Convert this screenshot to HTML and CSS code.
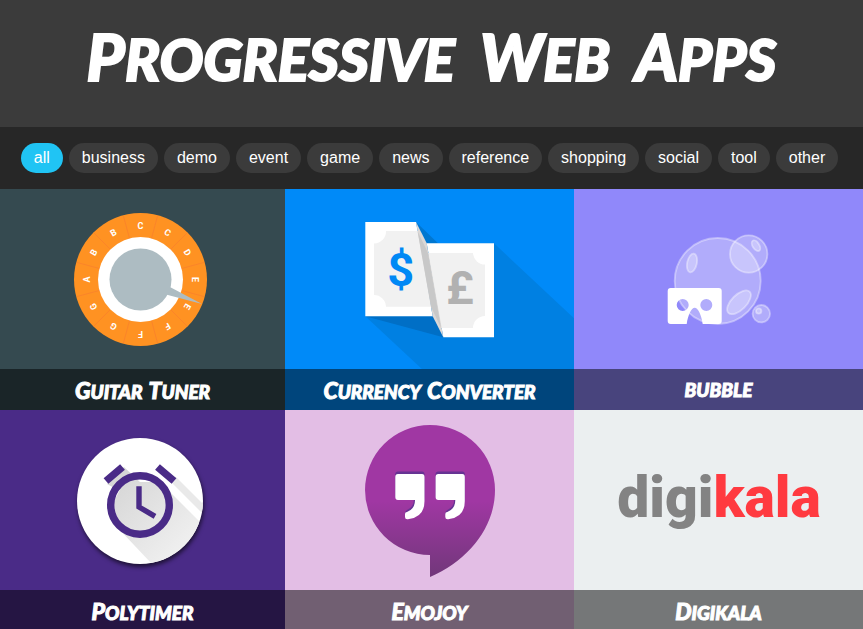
FILE: index.html
```html
<!DOCTYPE html>
<html lang="en">
<head>
<meta charset="utf-8">
<meta name="viewport" content="width=device-width, initial-scale=1">
<title>Progressive Web Apps</title>
<link rel="stylesheet" href="styles.css">
</head>
<body>
<header class="masthead">
  <h1 class="marker"><span>Progressive</span> <span>Web</span> <span>Apps</span></h1>
</header>
<nav class="filters" aria-label="Categories">
  <button type="button" class="chip active">all</button>
  <button type="button" class="chip">business</button>
  <button type="button" class="chip">demo</button>
  <button type="button" class="chip">event</button>
  <button type="button" class="chip">game</button>
  <button type="button" class="chip">news</button>
  <button type="button" class="chip">reference</button>
  <button type="button" class="chip">shopping</button>
  <button type="button" class="chip">social</button>
  <button type="button" class="chip">tool</button>
  <button type="button" class="chip">other</button>
</nav>
<main class="apps">
  <a class="app tuner" href="#tuner">
    <svg class="art" viewBox="0 0 285 180" aria-hidden="true">
      <circle cx="140.500" cy="90.500" r="66.500" fill="#ff9222"/>
      <g transform="translate(140.500 90.500)" stroke="#f9802c" stroke-width=".7">
        <path transform="rotate(15)" d="M0-66V66M-66 0H66"/>
        <path transform="rotate(45)" d="M0-66V66M-66 0H66"/>
        <path transform="rotate(75)" d="M0-66V66M-66 0H66"/>
      </g>
      <circle cx="140.500" cy="90.500" r="42.500" fill="#fff"/>
      <g class="notes" transform="translate(140.500 90.500)">
        <text y="-51">C</text>
        <text y="-51" transform="rotate(30)">C</text>
        <text y="-51" transform="rotate(60)">D</text>
        <text y="-51" transform="rotate(90)">E</text>
        <text y="-51" transform="rotate(120)">E</text>
        <text y="-51" transform="rotate(150)">F</text>
        <text y="-51" transform="rotate(180)">F</text>
        <text y="-51" transform="rotate(210)">G</text>
        <text y="-51" transform="rotate(240)">G</text>
        <text y="-51" transform="rotate(270)">A</text>
        <text y="-51" transform="rotate(300)">B</text>
        <text y="-51" transform="rotate(330)">B</text>
      </g>
      <path d="M169 97.500 202 115 166 105.500Z" fill="#adbcc2"/>
      <circle cx="140.500" cy="90.500" r="31" fill="#adbcc2"/>
    </svg>
    <h2 class="marker"><span>Guitar</span> <span>Tuner</span></h2>
  </a>
  <a class="app currency" href="#currency">
    <svg class="art" viewBox="0 0 289 180" aria-hidden="true">
      <path d="M209 54.300 909 710V854H861L80.300 127.300 141 54.300Z" fill="#0080e2"/>
      <path d="M131 33 153 54.300H141.700Z" fill="#0077d0"/>
      <path d="M80.300 127.300H148L158.300 148.300Z" fill="#006fc6"/>
      <path d="M80.300 33H131L147.700 127.300H80.300Z" fill="#fff"/>
      <path d="M101 42H134L146 117.700H101A12 12 0 0 0 89 106V54.500A12 12 0 0 0 101 42Z" fill="#f1f1f1"/>
      <path d="M141.700 54.300H209V148.300H158.300Z" fill="#fff"/>
      <path d="M143 64H188A12 12 0 0 0 200 75.500V127A12 12 0 0 0 188 139H156Z" fill="#f1f1f1"/>
      <path d="M131 33 141.700 54.300 158.300 148.300 147.700 127.300Z" fill="#dcd8d6"/>
      <path d="M132.500 42 143 64 156 139 146 117.700Z" fill="#c8c8c8"/>
      <text class="sign" x="115.700" y="97" fill="#0088f5">$</text>
      <text class="sign" x="175" y="115" fill="#b1b1b1">£</text>
    </svg>
    <h2 class="marker"><span>Currency</span> <span>Converter</span></h2>
  </a>
  <a class="app bubble" href="#bubble">
    <svg class="art" viewBox="0 0 289 180" aria-hidden="true">
      <g fill="#fff" fill-opacity=".3" stroke="#fff" stroke-opacity=".38" stroke-width="1.800">
        <circle cx="143.700" cy="92" r="43"/>
        <circle cx="174.700" cy="65" r="18.700"/>
        <circle cx="187.300" cy="124.700" r="8.700"/>
        <circle cx="184.700" cy="122" r="2.700"/>
        <ellipse cx="118" cy="74" rx="4.800" ry="9.500" transform="rotate(12 118 74)"/>
        <ellipse cx="165" cy="113.300" rx="15" ry="7.500" transform="rotate(-45 165 113.300)"/>
        <ellipse cx="182" cy="56.700" rx="3.300" ry="6" transform="rotate(-33 182 56.700)"/>
      </g>
      <path fill="#fff" fill-rule="evenodd" d="M96.700 99H144.700A3 3 0 0 1 147.700 102V132A3 3 0 0 1 144.700 135H128.700C127.500 126 124 118.700 120.700 118.700S114 126 112.700 135H96.700A3 3 0 0 1 93.700 132V102A3 3 0 0 1 96.700 99ZM102.700 116a6 6 0 1 0 12 0a6 6 0 1 0-12 0ZM126.300 116a6 6 0 1 0 12 0a6 6 0 1 0-12 0Z"/>
    </svg>
    <h2 class="marker plain"><span>bubble</span></h2>
  </a>
  <a class="app polytimer" href="#polytimer">
    <svg class="art" viewBox="0 0 285 180" aria-hidden="true">
      <defs>
        <linearGradient id="cast" gradientUnits="userSpaceOnUse" x1="115" y1="70" x2="185" y2="140"><stop offset="0" stop-color="#d6d6d6"/><stop offset="1" stop-color="#f0f0f0"/></linearGradient>
        <clipPath id="face"><circle cx="140" cy="91" r="63"/></clipPath>
      </defs>
      <circle class="disc" cx="140" cy="91" r="63" fill="#fff"/>
      <g clip-path="url(#face)">
        <path d="M124 57 140 72 118 80 107 74ZM160 72 240 152V190H186L117 117 112 95 124 72Z" fill="url(#cast)"/>
        <path d="M176 67 236 127V137L168 69Z" fill="#e9e9e9"/>
      </g>
      <g fill="none" stroke="#4a2b87">
        <circle cx="140" cy="95" r="29.300" stroke-width="7.400"/>
        <path d="M139 76.300V97L155 106.300" stroke-width="5.400"/>
        <path d="M106 71 122.500 57M157.500 57 174 71" stroke-width="7.400"/>
      </g>
    </svg>
    <h2 class="marker"><span>Polytimer</span></h2>
  </a>
  <a class="app emojoy" href="#emojoy">
    <svg class="art" viewBox="0 0 289 180" aria-hidden="true">
      <defs><linearGradient id="balloon" x1="0" y1="0" x2="0" y2="1"><stop offset=".5" stop-color="#a037a3"/><stop offset="1" stop-color="#71377a"/></linearGradient></defs>
      <path fill="url(#balloon)" d="M145 15A65 65 0 0 1 210 80C210 117 184 150 145 167V145A65 65 0 0 1 145 15Z"/>
      <g id="quotes">
        <path fill="#663393" d="M113 61.500H137Q139.500 61.500 139.500 64V86Q139.500 103 122 108L120 104Q120 101 122 100Q129 97 129 89H113Q110.300 89 110.300 86V64Q110.300 61.500 113 61.500Z"/>
        <path fill="#fff" d="M113 64H137Q139.500 64 139.500 67V91Q139.500 107 124 109Q120 110 120 107V104Q120 102 122 102Q130 99 130 90H113Q110.300 90 110.300 87V67Q110.300 64 113 64Z"/>
      </g>
      <use href="#quotes" x="40.300"/>
    </svg>
    <h2 class="marker"><span>Emojoy</span></h2>
  </a>
  <a class="app digikala" href="#digikala">
    <svg class="art" viewBox="0 0 289 180" aria-hidden="true">
      <text class="wordmark" x="145" y="107"><tspan fill="#838383">digi</tspan><tspan fill="#ff3a40">kala</tspan></text>
    </svg>
    <h2 class="marker"><span>Digikala</span></h2>
  </a>
</main>
</body>
</html>
```
FILE: styles.css
```css
* {
  box-sizing: border-box;
}

body {
  height: 100vh;
  margin: 0;
  overflow-x: hidden;
  background: #272727;
  color: #fff;
  font: 16px/20px "Liberation Sans", Arial, sans-serif;
}

.marker {
  display: flex;
  justify-content: center;
  margin: 0;
  font-family: "Permanent Marker", Lato, sans-serif;
  font-style: italic;
  font-weight: 900;
  text-transform: uppercase;
}

.masthead {
  padding: 10px 8px 25px;
  background: #3b3b3b;
}

.masthead h1 {
  flex-wrap: wrap;
  column-gap: 25px;
  font-size: 58px;
  line-height: 92px;
  -webkit-text-stroke: 2px #fff;
}

.masthead span {
  height: 92px;
}

.masthead span::first-letter {
  font-size: 65px;
}

.filters {
  display: flex;
  flex-wrap: wrap;
  justify-content: center;
  gap: 6px;
  padding: 16px 4px 16px 0;
}

.chip {
  height: 30px;
  padding: 0 13px;
  border: 0;
  border-radius: 15px;
  background: #3b3b3b;
  color: #fff;
  font: inherit;
}

.chip.active {
  background: #20c4f4;
}

.apps {
  display: grid;
  grid-template-columns: 285fr 289fr 289fr;
}

.app {
  overflow: hidden;
  color: #fff;
  text-decoration: none;
}

.art {
  display: block;
  width: 100%;
  height: 180px;
  overflow: visible;
  clip-path: inset(0 -1000px);
}

.app h2 {
  column-gap: 6px;
  height: 41px;
  background: rgba(0, 0, 0, 0.5);
  font-size: 19px;
  line-height: 42px;
  -webkit-text-stroke: 1px #fff;
}

.app h2 span::first-letter {
  font-size: 23px;
}

.app h2.plain span::first-letter {
  font-size: 19px;
}

.tuner { background: #354a50; }
.currency { background: #008af8; }
.bubble { background: #9088fa; }
.polytimer { background: #4a2b87; }
.emojoy { background: #e3bee5; }
.digikala { background: #ebeff0; }

.notes {
  fill: #fff;
  font: bold 9px Roboto, sans-serif;
  text-anchor: middle;
}

.sign {
  font: bold 47px Roboto, sans-serif;
  text-anchor: middle;
}

.disc {
  filter: drop-shadow(1px 3px 2px rgba(0, 0, 0, 0.6));
}

.wordmark {
  font: 900 57px Roboto, sans-serif;
  text-anchor: middle;
}
```
